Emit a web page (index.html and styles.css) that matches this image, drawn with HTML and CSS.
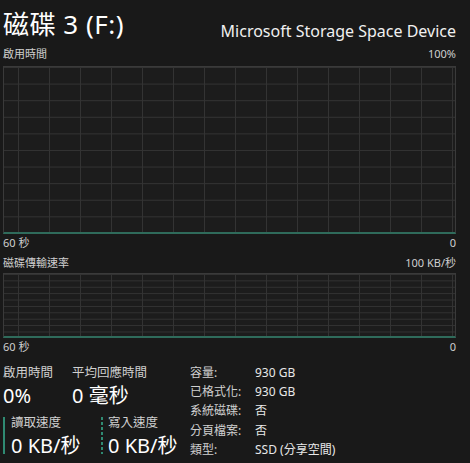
FILE: index.html
```html
<!DOCTYPE html>
<html lang="zh-Hant">
<head>
<meta charset="utf-8">
<link rel="stylesheet" href="styles.css">
</head>
<body>
<div class="page">
  <header class="head">
    <h1 class="title">磁碟 3 (F:)</h1>
    <div class="device">Microsoft Storage Space Device</div>
  </header>
  <div class="axis top"><span>啟用時間</span><span>100%</span></div>
  <div class="chart chart-a"></div>
  <div class="axis under"><span>60 秒</span><span>0</span></div>
  <div class="axis top2"><span>磁碟傳輸速率</span><span>100 KB/秒</span></div>
  <div class="chart chart-b"></div>
  <div class="axis under"><span>60 秒</span><span>0</span></div>
  <section class="stats">
    <div class="left">
      <div class="row">
        <div class="stat w1">
          <div class="lbl">啟用時間</div>
          <div class="val">0%</div>
        </div>
        <div class="stat">
          <div class="lbl">平均回應時間</div>
          <div class="val">0 毫秒</div>
        </div>
      </div>
      <div class="row">
        <div class="stat w2 bar solid">
          <div class="lbl">讀取速度</div>
          <div class="val">0 KB/秒</div>
        </div>
        <div class="stat bar dotted">
          <div class="lbl">寫入速度</div>
          <div class="val">0 KB/秒</div>
        </div>
      </div>
    </div>
    <dl class="props">
      <dt>容量:</dt><dd>930 GB</dd>
      <dt>已格式化:</dt><dd>930 GB</dd>
      <dt>系統磁碟:</dt><dd>否</dd>
      <dt>分頁檔案:</dt><dd>否</dd>
      <dt>類型:</dt><dd>SSD (分享空間)</dd>
    </dl>
  </section>
</div>
</body>
</html>
```

FILE: styles.css
```css
html, body {
  margin: 0;
  padding: 0;
  background: #191919;
}
body {
  width: 470px;
  height: 463px;
  overflow: hidden;
  font-family: "Noto Sans", "Noto Sans CJK TC", sans-serif;
  color: #d0d0d0;
}
.page {
  padding: 0 14px 0 3px;
}
.head {
  display: flex;
  justify-content: space-between;
  align-items: flex-start;
  height: 46px;
}
.title {
  margin: 0;
  padding-top: 3px;
  font-weight: 400;
  font-size: 26px;
  line-height: 42px;
  color: #ffffff;
  letter-spacing: 0.5px;
}
.device {
  padding-top: 20px;
  font-size: 16px;
  line-height: 22px;
  color: #f0f0f0;
}
.axis {
  display: flex;
  justify-content: space-between;
  font-size: 11px;
  line-height: 16px;
  color: #cfcfcf;
}
.axis.top {
  height: 20px;
  align-items: flex-start;
}
.axis.under {
  height: 18px;
  align-items: center;
}
.axis.top2 {
  height: 21px;
  align-items: center;
}
.chart {
  box-sizing: border-box;
  border: 1px solid #3a3a3a;
  border-bottom: 2px solid #2f6b5b;
  background-color: #1c1c1c;
  background-image:
    linear-gradient(to right, #333333 1px, transparent 1px),
    linear-gradient(to bottom, #333333 1px, transparent 1px);
  background-position: 14px 0, 0 0;
}
.chart-a {
  height: 168px;
  background-size: 31px 100%, 100% 16.6px;
}
.chart-b {
  height: 65px;
  background-size: 31px 100%, 100% 6.4px;
}
.stats {
  display: flex;
  margin-top: 8px;
}
.left {
  width: 187px;
  display: flex;
  flex-direction: column;
  gap: 4px;
}
.row {
  display: flex;
}
.stat .lbl {
  font-size: 12.5px;
  line-height: 18px;
  color: #d0d0d0;
}
.stat .val {
  font-size: 20px;
  line-height: 29px;
  margin-top: -1px;
  color: #ffffff;
}
.w1 { width: 69px; }
.w2 { width: 90px; }
.bar {
  padding-left: 8px;
  background-repeat: no-repeat;
  background-position: 0 3px;
  background-size: 2px 37px;
}
.bar.solid {
  background-image: linear-gradient(#2f8a72, #2f8a72);
}
.bar.dotted {
  padding-left: 7px;
  background-image: repeating-linear-gradient(to bottom, #2f8a72 0 3px, transparent 3px 5px);
}
.props {
  margin: 0;
  display: grid;
  grid-template-columns: 65px auto;
  row-gap: 0;
  font-size: 12px;
  line-height: 18px;
  color: #d0d0d0;
}
.props dt, .props dd {
  margin: 0;
}
.props dd {
  color: #e8e8e8;
}
```
